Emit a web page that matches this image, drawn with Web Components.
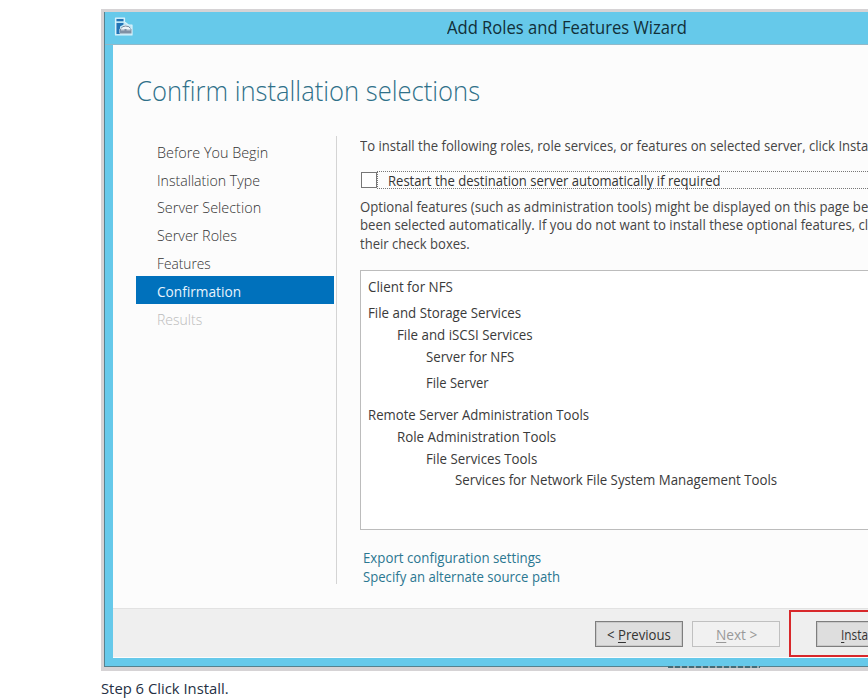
<!DOCTYPE html>
<html lang="en">
<head>
<meta charset="utf-8">
<title>Add Roles and Features Wizard</title>
<style>
html,body{margin:0;height:100%;overflow:hidden;background:#fff}
body{font-family:"Open Sans","Noto Sans",sans-serif}
</style>
</head>
<body>
<install-guide></install-guide>
<script>
const define=(name,html,extra)=>{
  const t=document.createElement('template');t.innerHTML=html;
  customElements.define(name,class extends HTMLElement{
    connectedCallback(){
      if(this.shadowRoot)return;
      this.attachShadow({mode:'open'}).append(t.content.cloneNode(true));
      if(extra)extra(this);
    }
  });
};

// A single text line condensed horizontally to the width given in "w".
define('fit-text',`<style>
:host{display:block;height:18px;line-height:18px;flex:none}
span{display:inline-block;white-space:pre;transform-origin:0 0;vertical-align:top}
</style><span><slot></slot></span>`,el=>{
  const w=+el.getAttribute('w'),s=el.shadowRoot.querySelector('span');
  el.style.width=w+'px';
  s.style.transform='scaleX('+w/s.offsetWidth+')';
});

define('server-icon',`<style>:host{display:block;width:20px;height:20px}svg{display:block}</style>
<svg width="20" height="20" viewBox="0 0 20 20">
<path d="M1.500 1h9v4l4 3h3.500v10H1.500z" fill="#bce6f6" stroke="#d9f2fb" stroke-width="1.200" stroke-linejoin="round"/>
<path d="M2.500 2h7v2.300h-7zM2.500 6h7v1.500L6 9.500V17H2.500z" fill="#2273b5"/>
<path d="M5.500 16.500V12l3-2.500L10 8h3l1.500 1.500L17.500 12v4.500z" fill="#eef4f8"/>
<path d="M7 11.500Q8 9 11.700 9T16.500 11.500" fill="none" stroke="#73859a"/>
<path d="M6 12h11.500v4.500H6z" fill="#8090a4"/>
<path d="M7 12.800h3.500m2 0H16.500" stroke="#e6edf3" stroke-width="1"/>
</svg>`);

define('title-bar',`<style>
:host{display:flex;height:33px;background:#66c9ea;box-sizing:border-box;border-bottom:1px solid #91b9c9;color:#123039;font-size:17.5px}
server-icon{margin:5px 0 0 9px}
fit-text{margin:6px 0 0 313px}
</style><server-icon></server-icon><fit-text w="240"><slot></slot></fit-text>`);

define('nav-item',`<style>
:host{display:block;height:27.8px;padding:6.600px 0 0 21px;box-sizing:border-box;color:#333;font-weight:300;font-size:14px}
:host([current]){background:#0071bc;color:#e8f4fc;font-weight:400}
:host([disabled]){color:#bbb}
</style><slot></slot>`);

define('wizard-nav',`<style>
:host{display:block;width:198px;padding:0 1px 0 0;flex:none}
</style>
<nav-item><fit-text w="111">Before You Begin</fit-text></nav-item>
<nav-item><fit-text w="103">Installation Type</fit-text></nav-item>
<nav-item><fit-text w="104">Server Selection</fit-text></nav-item>
<nav-item><fit-text w="80">Server Roles</fit-text></nav-item>
<nav-item><fit-text w="54">Features</fit-text></nav-item>
<nav-item current><fit-text w="84">Confirmation</fit-text></nav-item>
<nav-item disabled><fit-text w="45">Results</fit-text></nav-item>`);

define('check-row',`<style>
:host{display:flex;height:18px;color:#333;width:600px}
i{width:16px;height:16px;box-sizing:border-box;border:1px solid #777;background:#fff;margin:1px 0 0 1px}
div{flex:1;border:1px dotted #777;height:18px;box-sizing:border-box;padding-left:10px}
fit-text{margin-top:-1px}
</style><i></i><div><slot></slot></div>`);

define('feature-row',`<style>
:host{display:block;height:22px;padding-left:calc(var(--level,0)*29px)}
</style><slot></slot>`);

define('feature-list',`<style>
:host{display:block;box-sizing:border-box;width:600px;height:260px;border:1px solid #bcbcbc;background:#fff;padding:6.500px 0 0 7px;color:#3a3a3a;margin-top:17px}
</style>
<feature-row style="height:26px"><fit-text w="85">Client for NFS</fit-text></feature-row>
<feature-row><fit-text w="153">File and Storage Services</fit-text></feature-row>
<feature-row style="--level:1"><fit-text w="136">File and iSCSI Services</fit-text></feature-row>
<feature-row style="--level:2;height:26px"><fit-text w="88">Server for NFS</fit-text></feature-row>
<feature-row style="--level:2;height:32px"><fit-text w="63">File Server</fit-text></feature-row>
<feature-row><fit-text w="221">Remote Server Administration Tools</fit-text></feature-row>
<feature-row style="--level:1"><fit-text w="159">Role Administration Tools</fit-text></feature-row>
<feature-row style="--level:2;height:21px"><fit-text w="111">File Services Tools</fit-text></feature-row>
<feature-row style="--level:3"><fit-text w="322">Services for Network File System Management Tools</fit-text></feature-row>`);

define('confirm-panel',`<style>
:host{display:block;font-size:14px;color:#454545;padding-left:23px}
.first{margin-top:1px}
check-row{margin-top:16px}
.p{display:grid;grid-auto-rows:18.7px;margin-top:8.500px}
feature-list{margin-top:16.500px}
.l{display:grid;grid-auto-rows:18.7px;margin:19px 0 0 3px;color:#2b7791}
</style>
<fit-text class="first" w="508">To install the following roles, role services, or features on selected server, click Insta</fit-text>
<check-row><fit-text w="333">Restart the destination server automatically if required</fit-text></check-row>
<div class="p">
<fit-text w="508">Optional features (such as administration tools) might be displayed on this page be</fit-text>
<fit-text w="508">been selected automatically. If you do not want to install these optional features, cl</fit-text>
<fit-text w="110">their check boxes.</fit-text></div>
<feature-list></feature-list>
<div class="l"><fit-text w="178">Export configuration settings</fit-text><fit-text w="197">Specify an alternate source path</fit-text></div>`);

define('push-button',`<style>
:host{display:flex;justify-content:center;box-sizing:border-box;width:88px;height:26px;padding-top:4px;border:1px solid #7e7e7e;box-shadow:inset 0 0 0 1px #aaa6;background:#dedede;color:#333;font-size:14px;flex:none}
:host([disabled]){border-color:#c0c0c0;background:#f1f1f1;color:#999;box-shadow:none}
</style><slot></slot>`);

define('wizard-footer',`<style>
:host{display:flex;height:49px;box-sizing:border-box;background:#efefef;border-top:1px solid #e2e2e2;padding-left:482px}
push-button{margin:12px 9px 0 0}
.hl{flex:none;box-sizing:border-box;width:180px;height:47px;border:2px solid #d8282b;margin:1px 0 0 0;padding-left:25px}
.hl push-button{margin-top:9px;justify-content:flex-start;padding-left:24px}
u{text-underline-offset:2px}
</style>
<push-button><fit-text w="64">&lt; <u>P</u>revious</fit-text></push-button>
<push-button disabled><fit-text w="41"><u>N</u>ext &gt;</fit-text></push-button>
<div class="hl"><push-button><fit-text w="27"><u>I</u>nsta</fit-text></push-button></div>`);

define('wizard-window',`<style>
:host{display:block;box-sizing:border-box;width:780px;height:662px;border:solid #d6d3d5;border-width:3px 0 4px 3px}
.frame{box-sizing:border-box;height:655px;border:solid #55818e;border-width:0 0 1px 1px;background:#66c9ea;overflow:hidden}
.in{margin-left:8px;background:#fcfcfc;height:613px;display:flex;flex-direction:column;overflow:hidden}
h1{margin:31px 0 0 23px;font-size:27px;font-weight:300;color:#2f7089;height:60px;flex:none}
h1 fit-text{line-height:30px;height:30px}
.cols{display:flex;height:472px;padding-left:23px;flex:none}
wizard-nav{margin-top:1.300px}
.rule{width:1px;height:448px;background:#d4d4d4;margin-left:1px;flex:none}
.edge{height:2px;width:92px;margin:-1px 0 0 564px;background:repeating-linear-gradient(90deg,#456b76 0 5px,#9aabb0 5px 7px)}
</style>
<div class="frame"><title-bar>Add Roles and Features Wizard</title-bar>
<div class="in"><h1><fit-text w="344">Confirm installation selections</fit-text></h1>
<div class="cols"><wizard-nav></wizard-nav><div class="rule"></div><confirm-panel></confirm-panel></div>
<wizard-footer></wizard-footer></div></div><div class="edge"></div>`);

define('install-guide',`<style>
:host{display:block;width:868px;height:698px;overflow:hidden;box-sizing:border-box;padding:9px 0 0 101px}
.cap{font-size:14px;color:#253044;margin-top:9px}
</style><wizard-window></wizard-window><fit-text class="cap" w="128">Step 6 Click Install.</fit-text>`);
</script>
</body>
</html>
